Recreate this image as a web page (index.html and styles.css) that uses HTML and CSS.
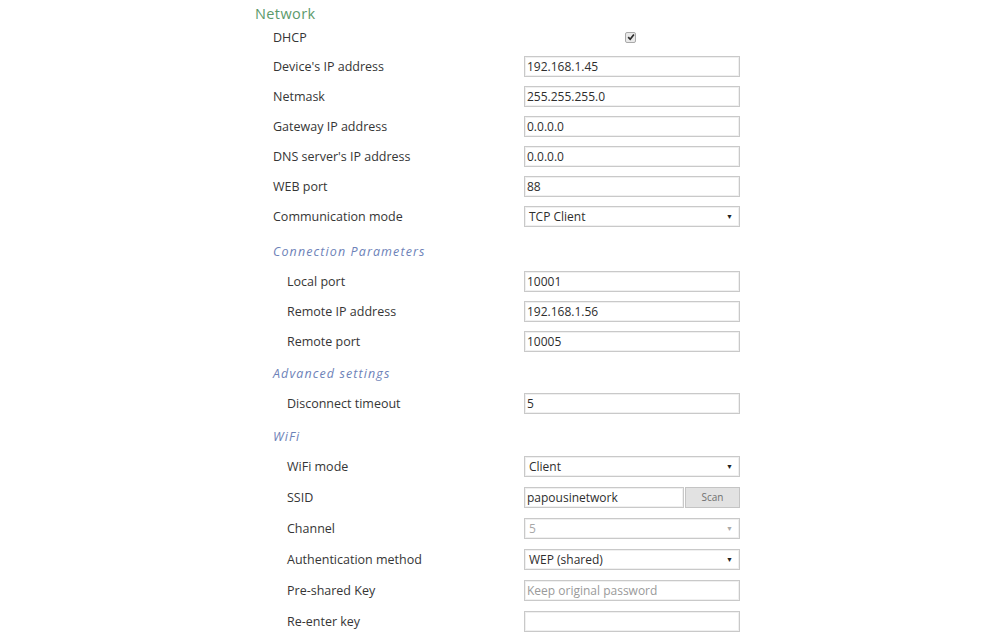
FILE: index.html
```html
<!DOCTYPE html>
<html>
<head>
<meta charset="utf-8">
<link rel="stylesheet" href="styles.css">
</head>
<body>
<div class="page">
  <div class="title">Network</div>
  <div class="row row-dhcp">
    <div class="label">DHCP</div>
    <div class="field"><span class="check"><svg width="8" height="8" viewBox="0 0 8 8"><path d="M1.2 4.2 L3.2 6.3 L6.9 1.4" fill="none" stroke="#2b2b2b" stroke-width="1.7"/></svg></span></div>
  </div>
  <div class="row"><div class="label">Device's IP address</div><div class="field"><div class="input">192.168.1.45</div></div></div>
  <div class="row"><div class="label">Netmask</div><div class="field"><div class="input">255.255.255.0</div></div></div>
  <div class="row"><div class="label">Gateway IP address</div><div class="field"><div class="input">0.0.0.0</div></div></div>
  <div class="row"><div class="label">DNS server's IP address</div><div class="field"><div class="input">0.0.0.0</div></div></div>
  <div class="row"><div class="label">WEB port</div><div class="field"><div class="input">88</div></div></div>
  <div class="row"><div class="label">Communication mode</div><div class="field"><div class="input select">TCP Client<span class="arrow">&#9660;</span></div></div></div>

  <div class="section section-conn">Connection Parameters</div>
  <div class="row sub"><div class="label">Local port</div><div class="field"><div class="input">10001</div></div></div>
  <div class="row sub"><div class="label">Remote IP address</div><div class="field"><div class="input">192.168.1.56</div></div></div>
  <div class="row sub"><div class="label">Remote port</div><div class="field"><div class="input">10005</div></div></div>

  <div class="section section-adv">Advanced settings</div>
  <div class="row sub"><div class="label">Disconnect timeout</div><div class="field"><div class="input">5</div></div></div>

  <div class="section">WiFi</div>
  <div class="row sub wide"><div class="label">WiFi mode</div><div class="field"><div class="input select">Client<span class="arrow">&#9660;</span></div></div></div>
  <div class="row sub wide"><div class="label">SSID</div><div class="field ssid"><div class="input ssid-input">papousinetwork</div><div class="btn">Scan</div></div></div>
  <div class="row sub wide"><div class="label">Channel</div><div class="field"><div class="input select disabled">5<span class="arrow">&#9660;</span></div></div></div>
  <div class="row sub wide"><div class="label">Authentication method</div><div class="field"><div class="input select">WEP (shared)<span class="arrow">&#9660;</span></div></div></div>
  <div class="row sub wide"><div class="label">Pre-shared Key</div><div class="field"><div class="input placeholder">Keep original password</div></div></div>
  <div class="row sub wide"><div class="label">Re-enter key</div><div class="field"><div class="input"></div></div></div>
</div>
</body>
</html>
```

FILE: styles.css
```css
html, body {
  margin: 0;
  padding: 0;
  background: #ffffff;
}
body {
  font-family: "Open Sans", "Noto Sans", sans-serif;
  font-size: 12.5px;
  color: #363636;
}
.page {
  padding-left: 255px;
  width: 486px;
}
.title {
  font-size: 14.5px;
  color: #5c9a6b;
  line-height: 20px;
  padding-top: 4px;
  height: 20px;
  letter-spacing: 0.4px;
}
.row {
  display: flex;
  align-items: center;
  height: 30px;
}
.row-dhcp {
  height: 27px;
}
.row.wide {
  height: 31px;
}
.label {
  width: 251px;
  padding-left: 18px;
  flex: none;
}
.row.sub .label {
  padding-left: 32px;
  width: 237px;
}
.field {
  display: flex;
  align-items: center;
  width: 216px;
}
.check {
  margin-left: 101px;
  margin-top: -1px;
  width: 9px;
  height: 9px;
  border: 1px solid #a9a9a9;
  border-radius: 2px;
  background: #e9e9e9;
  display: flex;
  align-items: center;
  justify-content: center;
}
.input {
  box-sizing: border-box;
  width: 216px;
  height: 21px;
  border: 1px solid #c9c9c9;
  box-shadow: inset 0 0 0 1px #f0f0f0;
  padding-left: 2px;
  line-height: 19px;
  font-size: 12px;
  background: #ffffff;
  position: relative;
  color: #2e2e2e;
}
.select {
  padding-left: 4px;
}
.arrow {
  position: absolute;
  right: 6px;
  top: 0;
  font-size: 7px;
  color: #222;
}
.disabled {
  color: #a8a8a8;
}
.disabled .arrow {
  color: #aaaaaa;
}
.placeholder {
  color: #9a9a9a;
}
.ssid-input {
  width: 160px;
}
.btn {
  box-sizing: border-box;
  margin-left: 1px;
  width: 55px;
  height: 21px;
  background: #e2e2e2;
  border: 1px solid #c4c4c4;
  color: #707070;
  font-size: 10px;
  line-height: 18px;
  text-align: center;
}
.section {
  height: 33px;
  box-sizing: border-box;
  padding-top: 10px;
  line-height: 18px;
  padding-left: 18px;
  font-style: italic;
  color: #6d82b8;
  font-size: 12.5px;
  letter-spacing: 1.1px;
}
.section-conn {
  height: 35px;
  padding-top: 12px;
}
.section-adv {
  height: 32px;
  padding-top: 9px;
}
```
